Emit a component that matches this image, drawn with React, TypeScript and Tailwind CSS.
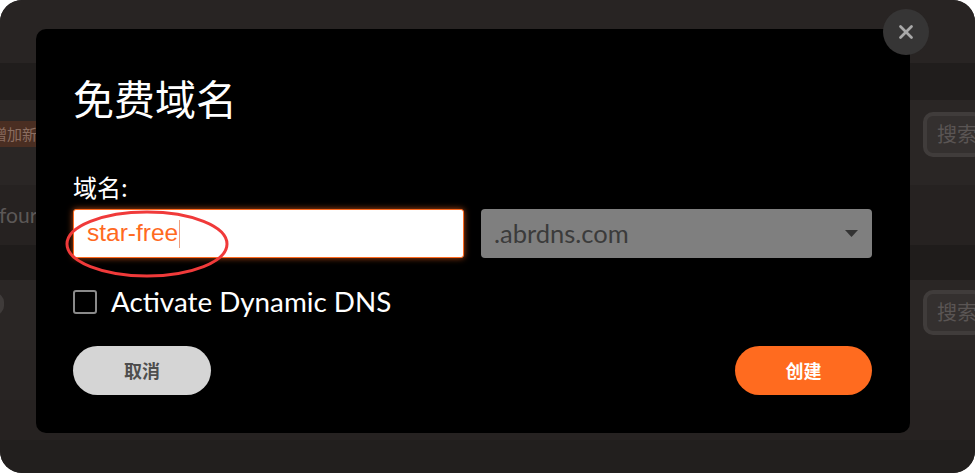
import { X } from "lucide-react";

const cjk = "font-['Noto_Sans_CJK_SC',sans-serif]";
const latin = "font-['Lato','Noto_Sans_CJK_SC',sans-serif]";

function SearchStub() {
  return (
    <div className="h-[45px] w-[60px] shrink-0 rounded-[10px] border-[4px] border-[#403c3b] bg-[#34302f] pl-[10px] pt-[4px]">
      <span className={`${cjk} text-[20px] leading-[28px] text-[#5a5554] whitespace-nowrap`}>
        搜索
      </span>
    </div>
  );
}

function Backdrop() {
  return (
    <div className="flex h-full flex-col">
      <div className="h-[63px] bg-[#282423]" />
      <div className="h-[37px] bg-[#201d1c]" />
      <div className="flex h-[85px] items-start justify-between bg-[#2a2625]">
        <div className="mt-[21px] -ml-[12px] flex h-[26px] items-center rounded-[3px] bg-[#4a2e22] px-[4px]">
          <span className={`${cjk} text-[15px] text-[#8a6d60]`}>增加新</span>
        </div>
        <div className="mt-[12px] -mr-[8px]">
          <SearchStub />
        </div>
      </div>
      <div className="flex h-[60px] items-center bg-[#262221]">
        <span className={`${latin} -ml-[1px] text-[21px] text-[#5c5857]`}>four</span>
      </div>
      <div className="h-[35px] bg-[#1f1c1b]" />
      <div className="flex h-[70px] items-start justify-between bg-[#2a2625]">
        <div className="mt-[13px] -ml-[14px] h-[22px] w-[18px] rounded-full bg-[#3f3b3a]" />
        <div className="mt-[10px] -mr-[8px]">
          <SearchStub />
        </div>
      </div>
      <div className="h-[50px] bg-[#282423]" />
      <div className="h-[40px] bg-[#262221]" />
      <div className="flex-1 bg-[#221f1e]" />
    </div>
  );
}

function DomainField() {
  return (
    <div className="flex h-[49px] w-[391px] items-center rounded-[3px] border border-[#ff6a1f] bg-white pl-[13px] shadow-[0_0_6px_rgba(255,106,31,0.7)]">
      <span className="font-['Liberation_Sans',sans-serif] text-[24.5px] text-[#ff6a1f]">star-free</span>
      <span className="ml-[1px] h-[28px] w-[1px] bg-[#f0a080]" />
    </div>
  );
}

function SuffixSelect() {
  return (
    <div className="flex h-[49px] w-[391px] items-center justify-between rounded-[4px] bg-[#7f7f7f] pl-[13px] pr-[14px]">
      <span className={`${latin} text-[25.5px] text-[#3b3b3b]`}>.abrdns.com</span>
      <svg width="13" height="7" viewBox="0 0 13 7">
        <path d="M0 0h13L6.5 7z" fill="#333" />
      </svg>
    </div>
  );
}

function Modal() {
  return (
    <div className="absolute left-[36px] top-[29px] flex h-[404px] w-[874px] flex-col rounded-[10px] bg-black pl-[37px] pr-[38px] pt-[44px]">
      <h2 className={`${cjk} text-[41px] leading-[48px] text-white`}>免费域名</h2>

      <label className={`${cjk} mt-[50px] text-[24px] leading-[32px] text-white`}>域名:</label>
      <div className="mt-[6px] flex gap-[17px]">
        <DomainField />
        <SuffixSelect />
      </div>

      <div className="mt-[28px] flex items-center gap-[14px]">
        <span className="h-[24px] w-[24px] rounded-[3px] border-2 border-[#8a8a8a]" />
        <span className={`${latin} text-[27.8px] leading-[32px] text-white`}>Activate Dynamic DNS</span>
      </div>

      <div className="mt-[28px] flex justify-between">
        <button className={`${cjk} h-[49px] w-[138px] rounded-full bg-[#d5d5d5] text-[18px] font-bold text-[#4e4e4e]`}>
          取消
        </button>
        <button className={`${cjk} h-[49px] w-[137px] rounded-full bg-[#ff6b1f] text-[18px] font-bold text-white`}>
          创建
        </button>
      </div>
    </div>
  );
}

export default function App() {
  return (
    <div className="h-[473px] w-[975px] bg-white">
      <div className="relative h-full w-full overflow-hidden rounded-[22px] bg-[#272322]">
        <Backdrop />
        <Modal />
        <button className="absolute left-[883px] top-[9px] flex h-[46px] w-[46px] items-center justify-center rounded-full bg-[#363535]">
          <X size={22} strokeWidth={3} color="#a9a9a9" />
        </button>
        <svg className="absolute left-[64px] top-[208px]" width="166" height="72" viewBox="0 0 166 72">
          <ellipse cx="83" cy="36" rx="80" ry="32" fill="none" stroke="#f03a3a" strokeWidth="3" />
        </svg>
      </div>
    </div>
  );
}
